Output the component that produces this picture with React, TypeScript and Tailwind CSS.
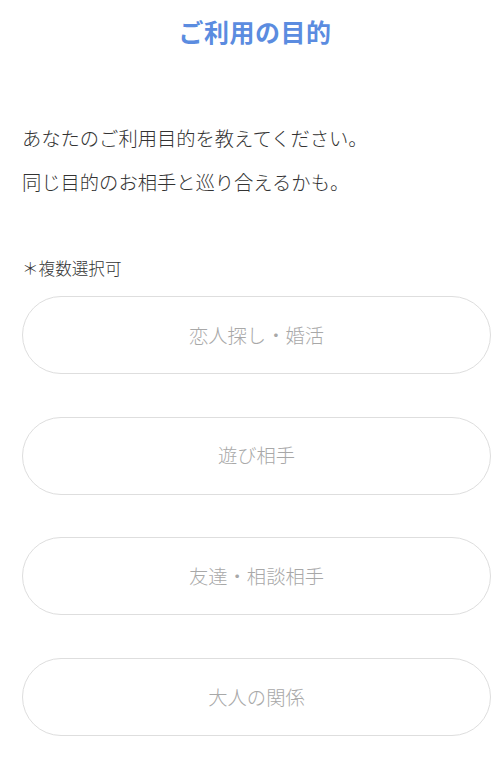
import React from "react";

const options = ["恋人探し・婚活", "遊び相手", "友達・相談相手", "大人の関係"];

export default function App() {
  return (
    <div
      className="w-[500px] h-[760px] bg-white overflow-hidden"
      style={{ fontFamily: '"Noto Sans CJK JP", "Noto Sans", sans-serif' }}
    >
      <div className="h-[63px] pl-[10px] flex items-center justify-center">
        <h1 className="text-[25px] font-bold text-[#5b8ce0] tracking-[0.5px]">ご利用の目的</h1>
      </div>
      <div className="px-[22px]">
        <p className="mt-[53px] text-[19.3px] leading-[44px] font-light text-[#333333]">
          あなたのご利用目的を教えてください。
          <br />
          同じ目的のお相手と巡り合えるかも。
        </p>
        <p className="mt-[53px] text-[16.6px] leading-[22px] font-light text-[#333333]">＊複数選択可</p>
        <div className="mt-[17px] flex flex-col gap-[42.7px]">
          {options.map((o) => (
            <button
              key={o}
              className="w-[469px] h-[78px] rounded-full border border-[#dedede] bg-white flex items-center justify-center text-[19.3px] font-light text-[#a8a8a8]"
            >
              {o}
            </button>
          ))}
        </div>
      </div>
    </div>
  );
}
